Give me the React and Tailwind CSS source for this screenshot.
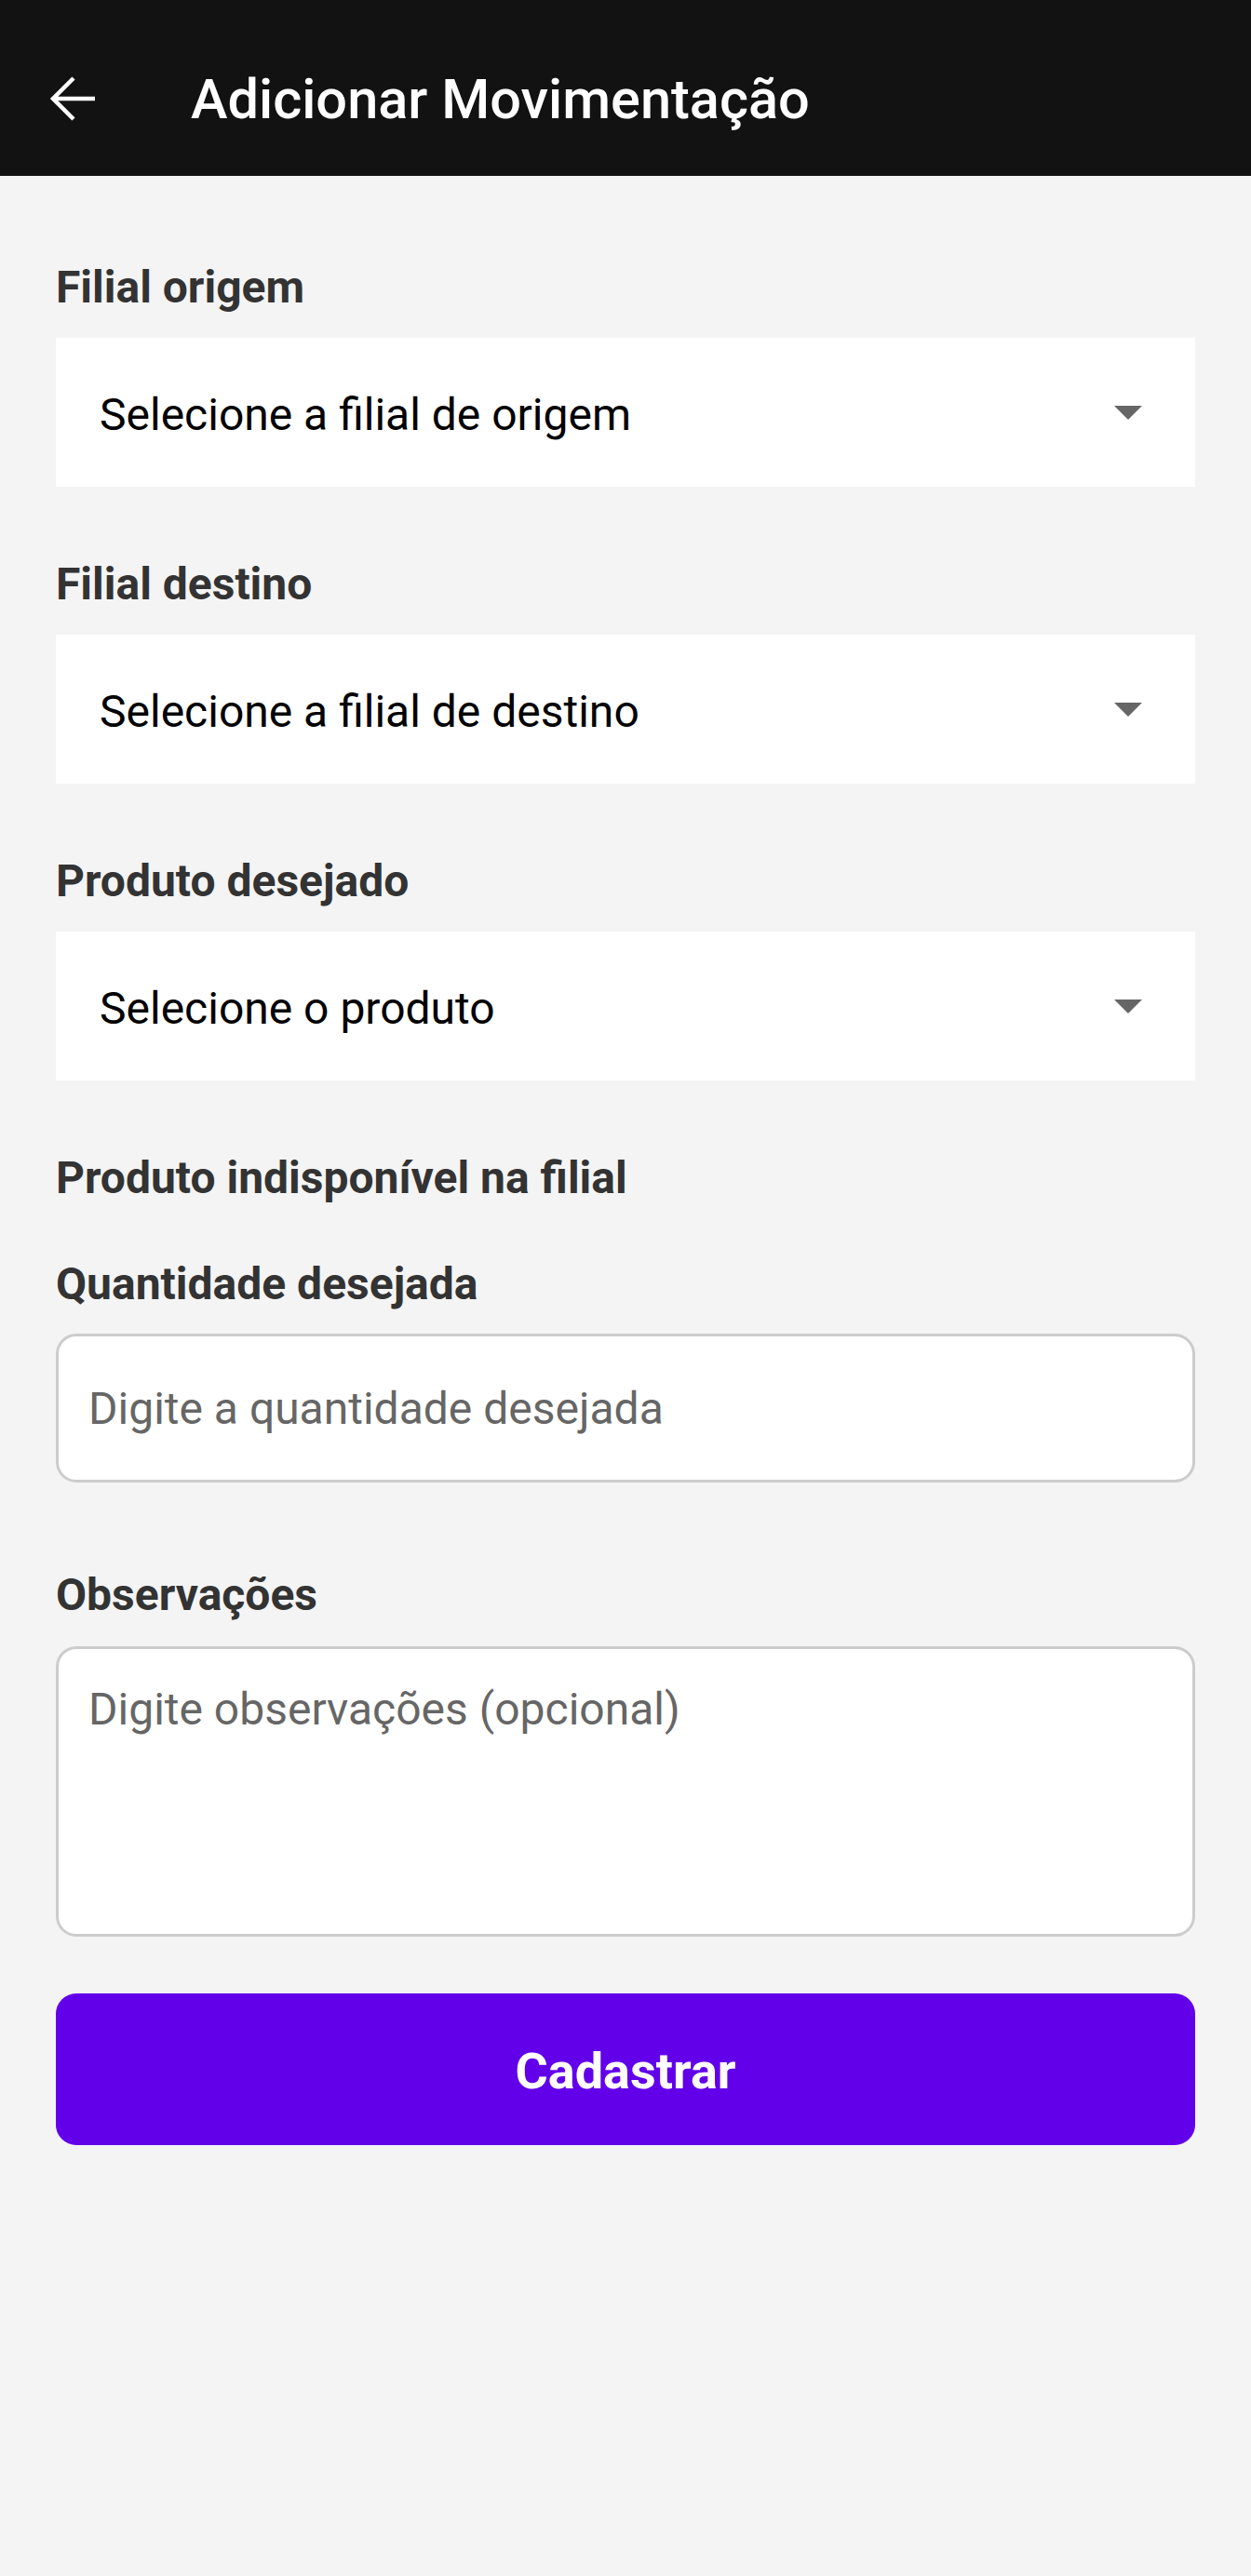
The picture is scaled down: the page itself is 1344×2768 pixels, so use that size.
import React from "react";

function Caret() {
  return (
    <svg width="30" height="15" viewBox="0 0 30 15" className="shrink-0">
      <path d="M0 0 L30 0 L15 15 Z" fill="#666666" />
    </svg>
  );
}

function Label({ children, className = "" }) {
  return (
    <div className={"text-[48px] h-[49px] leading-[49px] font-bold text-[#333333] whitespace-nowrap " + className}>
      {children}
    </div>
  );
}

function SelectBox({ text, className = "" }) {
  return (
    <div className={"h-[160px] bg-white flex items-center justify-between pl-[47px] pr-[57px] " + className}>
      <span className="mt-[6px] text-[48px] leading-none text-black whitespace-nowrap">{text}</span>
      <Caret />
    </div>
  );
}

export default function App() {
  return (
    <div className="min-h-[2768px] bg-[#f4f4f4] font-['Roboto',sans-serif]">
      <header className="h-[189px] bg-[#121212] flex items-start pl-[53px]">
        <svg width="50" height="50" viewBox="0 0 50 50" className="mt-[81px] shrink-0">
          <path d="M49 25 H4 M26 3 L4 25 L26 47" fill="none" stroke="#ffffff" strokeWidth="4.5" strokeLinecap="butt" strokeLinejoin="miter" />
        </svg>
        <h1 className="ml-[102px] mt-[78px] text-[59.5px] leading-none font-medium text-white whitespace-nowrap">
          Adicionar Movimentação
        </h1>
      </header>

      <main className="px-[60px] pt-[95px] flex flex-col">
        <Label>Filial origem</Label>
        <SelectBox className="mt-[30px]" text="Selecione a filial de origem" />

        <Label className="mt-[80px]">Filial destino</Label>
        <SelectBox className="mt-[30px]" text="Selecione a filial de destino" />

        <Label className="mt-[80px]">Produto desejado</Label>
        <SelectBox className="mt-[30px]" text="Selecione o produto" />

        <Label className="mt-[80px]">Produto indisponível na filial</Label>

        <Label className="mt-[65px]">Quantidade desejada</Label>
        <input
          type="text"
          placeholder="Digite a quantidade desejada"
          className="mt-[29px] h-[160px] w-full bg-white border-[3px] border-[#cccccc] rounded-[22px] pl-[32px] text-[48px] text-black placeholder:text-[#666666] outline-none"
        />

        <Label className="mt-[96px]">Observações</Label>
        <textarea
          placeholder="Digite observações (opcional)"
          className="mt-[31px] h-[312px] w-full bg-white border-[3px] border-[#cccccc] rounded-[22px] pl-[32px] pt-[41px] text-[48px] leading-none text-black placeholder:text-[#666666] outline-none resize-none"
        />

        <button
          type="button"
          className="mt-[61px] h-[163px] w-full rounded-[22px] bg-[#6200ea] text-white text-[54px] font-bold leading-none"
        >
          <span className="inline-block mt-[5px]">Cadastrar</span>
        </button>
      </main>
    </div>
  );
}
